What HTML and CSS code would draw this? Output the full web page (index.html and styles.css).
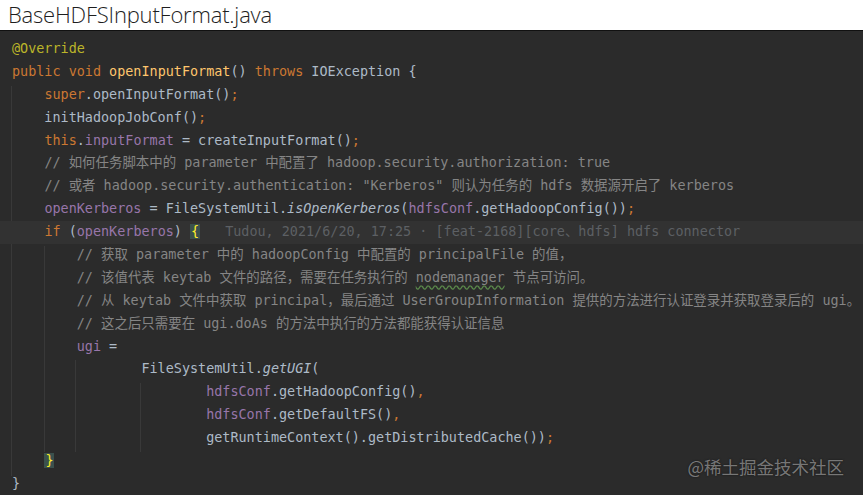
FILE: index.html
```html
<!DOCTYPE html>
<html lang="zh">

<head>
    <meta charset="UTF-8">
    <link rel="stylesheet" href="styles.css">
</head>

<body>
    <div class="title">BaseHDFSInputFormat.java</div>

    <div class="editor">
        <!-- indent guides -->
        <div class="guide guide-method"></div>
        <div class="guide guide-if"></div>
        <div class="guide guide-ugi"></div>
        <div class="guide guide-args"></div>

        <div class="code">
            <div class="line"><span class="ann">@Override</span></div>
            <div class="line"><span class="kw">public void </span><span class="decl">openInputFormat</span>() <span class="kw">throws</span> IOException {</div>
            <div class="line">    <span class="kw">super</span>.openInputFormat()<span class="kw">;</span></div>
            <div class="line">    initHadoopJobConf()<span class="kw">;</span></div>
            <div class="line">    <span class="kw">this</span>.<span class="field">inputFormat</span> = createInputFormat()<span class="kw">;</span></div>
            <div class="line">    <span class="cmt">// 如何任务脚本中的 parameter 中配置了 hadoop.security.authorization: true</span></div>
            <div class="line">    <span class="cmt">// 或者 hadoop.security.authentication: "Kerberos" 则认为任务的 hdfs 数据源开启了 kerberos</span></div>
            <div class="line">    <span class="field">openKerberos</span> = FileSystemUtil.<i>isOpenKerberos</i>(<span class="field">hdfsConf</span>.getHadoopConfig())<span class="kw">;</span></div>
            <div class="line line-current">    <span class="kw">if</span> (<span class="field">openKerberos</span>) <span class="brace">{</span><span class="blame">Tudou, 2021/6/20, 17:25 · [feat-2168][core、hdfs] hdfs connector</span></div>
            <div class="line">        <span class="cmt">// 获取 parameter 中的 hadoopConfig 中配置的 principalFile 的值，</span></div>
            <div class="line">        <span class="cmt">// 该值代表 keytab 文件的路径，需要在任务执行的 <span class="typo">nodemanager</span> 节点可访问。</span></div>
            <div class="line">        <span class="cmt">// 从 keytab 文件中获取 principal，最后通过 UserGroupInformation 提供的方法进行认证登录并获取登录后的 ugi。</span></div>
            <div class="line">        <span class="cmt">// 这之后只需要在 ugi.doAs 的方法中执行的方法都能获得认证信息</span></div>
            <div class="line">        <span class="field">ugi</span> =</div>
            <div class="line">                FileSystemUtil.<i>getUGI</i>(</div>
            <div class="line">                        <span class="field">hdfsConf</span>.getHadoopConfig()<span class="kw">,</span></div>
            <div class="line">                        <span class="field">hdfsConf</span>.getDefaultFS()<span class="kw">,</span></div>
            <div class="line">                        getRuntimeContext().getDistributedCache())<span class="kw">;</span></div>
            <div class="line">    <span class="brace">}</span></div>
            <div class="line">}</div>
        </div>

        <div class="watermark">@稀土掘金技术社区</div>
    </div>
</body>

</html>
```

FILE: styles.css
```css
body {
    margin: 0;
    width: 863px;
    height: 495px;
    overflow: hidden;
    background-color: #2b2b2b;
}

.title {
    height: 30px;
    padding-left: 8px;
    background-color: #fff;
    color: #1e1e1e;
    font-family: 'Open Sans', sans-serif;
    font-weight: 300;
    font-size: 22px;
    line-height: 28px;
    letter-spacing: -0.2px;
}

.editor {
    position: relative;
    height: 465px;
    border-top: 1px solid #111;
    background-color: #2b2b2b;
    box-sizing: border-box;
    padding-top: 7px;
}

.code {
    font-family: 'DejaVu Sans Mono', 'Noto Sans CJK SC', monospace;
    font-size: 13.45px;
    line-height: 22.9px;
    color: #adbac7;
}

.line {
    position: relative;
    padding-left: 12px;
    height: 22.9px;
    white-space: pre;
}

.line-current {
    background-color: #323232;
}

.kw {
    color: #cc7832;
}

.ann {
    color: #bbb529;
}

.decl {
    color: #ffc66d;
}

.field {
    color: #9876aa;
}

.cmt {
    color: #858585;
}

.typo {
    text-decoration: underline wavy #5a8a4a;
    text-underline-offset: 3px;
}

.brace {
    color: #ffef28;
    background-color: #3b514d;
    padding: 0 1px;
}

.blame {
    margin-left: 25px;
    color: #5d6064;
}

i {
    font-style: italic;
}

.guide {
    position: absolute;
    width: 1px;
    background-color: #393939;
}

.guide-method {
    left: 11px;
    top: 55px;
    height: 390px;
}

.guide-if {
    left: 44px;
    top: 215px;
    height: 206px;
}

.guide-ugi {
    left: 75px;
    top: 329px;
    height: 92px;
}

.guide-args {
    left: 140px;
    top: 352px;
    height: 69px;
}

.watermark {
    position: absolute;
    right: 19px;
    bottom: 17px;
    font-family: 'Noto Sans CJK SC', sans-serif;
    font-size: 17.5px;
    line-height: 22px;
    color: rgba(200, 200, 200, 0.55);
    text-shadow: 0 0 2px rgba(0, 0, 0, 0.6);
}
```
